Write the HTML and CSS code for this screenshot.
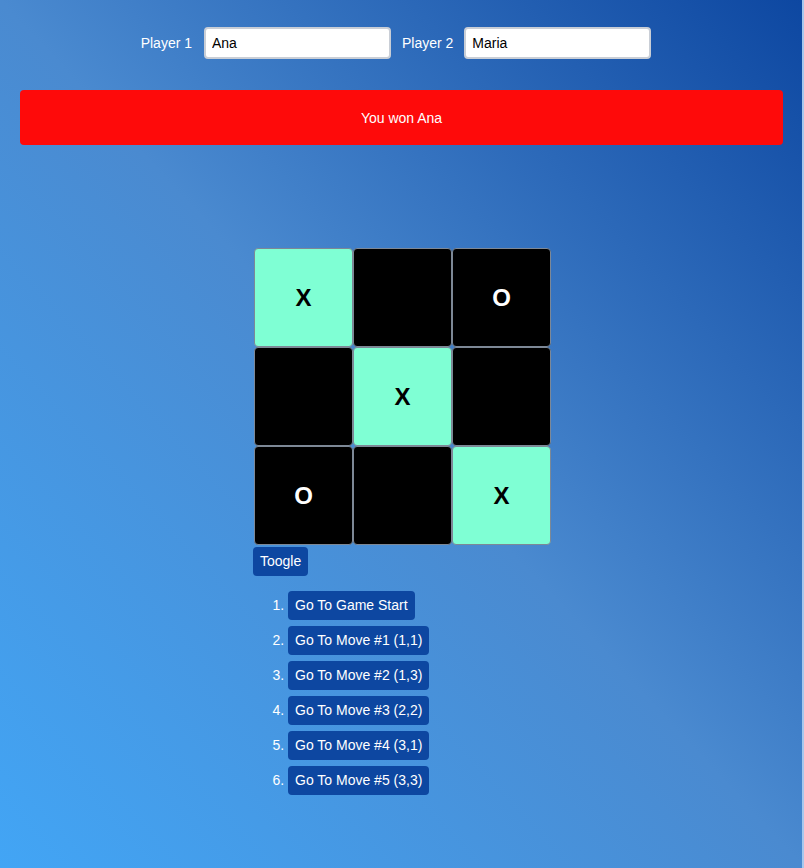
FILE: index.html
```html
<!DOCTYPE html>
<html lang="en">
<head>
<meta charset="utf-8">
<title>Tic Tac Toe</title>
<link rel="stylesheet" href="styles.css">
</head>
<body>
<div class="app">
  <div class="players">
    <label class="player-label">Player 1</label>
    <input class="player-input" type="text" value="Ana">
    <label class="player-label second">Player 2</label>
    <input class="player-input" type="text" value="Maria">
  </div>
  <div class="banner">You won Ana</div>
  <div class="game">
    <div class="board">
      <div class="cell win">X</div>
      <div class="cell"></div>
      <div class="cell">O</div>
      <div class="cell"></div>
      <div class="cell win">X</div>
      <div class="cell"></div>
      <div class="cell">O</div>
      <div class="cell"></div>
      <div class="cell win">X</div>
    </div>
    <button class="btn toggle">Toogle</button>
    <ol class="moves">
      <li><button class="btn">Go To Game Start</button></li>
      <li><button class="btn">Go To Move #1 (1,1)</button></li>
      <li><button class="btn">Go To Move #2 (1,3)</button></li>
      <li><button class="btn">Go To Move #3 (2,2)</button></li>
      <li><button class="btn">Go To Move #4 (3,1)</button></li>
      <li><button class="btn">Go To Move #5 (3,3)</button></li>
    </ol>
  </div>
</div>
</body>
</html>
```
FILE: styles.css
```css
html, body {
  margin: 0;
  padding: 0;
  min-height: 100%;
}
body {
  min-height: 868px;
  font-family: "Liberation Sans", Arial, sans-serif;
  font-size: 14px;
  color: #fff;
  background: linear-gradient(to top right, #42a5f5 0%, #4a8ad0 50%, #0d47a1 100%);
  box-shadow: inset -2px 0 0 #a6c8ee;
}
.app {
  display: flex;
  flex-direction: column;
}
.players {
  display: flex;
  justify-content: center;
  align-items: center;
  padding: 27px 12px 0 0;
}
.player-label {
  color: #fff;
  font-size: 14px;
  margin-right: 12px;
}
.player-label.second {
  margin-left: 11px;
  margin-right: 11px;
}
.player-input {
  box-sizing: border-box;
  width: 187px;
  height: 32px;
  margin: 0;
  padding: 0 6px;
  border: 2px solid #c9ced6;
  border-radius: 4px;
  background: #fff;
  font-family: "Liberation Sans", Arial, sans-serif;
  font-size: 14px;
  color: #000;
  outline: none;
}
.banner {
  margin: 31px 21px 0 20px;
  height: 55px;
  background: #fe0a0a;
  border-radius: 4px;
  display: flex;
  align-items: center;
  justify-content: center;
  font-size: 14px;
  color: #fff;
}
.game {
  width: 298px;
  margin: 103px auto 0;
  display: flex;
  flex-direction: column;
  align-items: flex-start;
}
.board {
  display: grid;
  grid-template-columns: repeat(3, 99px);
  grid-template-rows: repeat(3, 99px);
  margin-left: 1px;
}
.cell {
  box-sizing: border-box;
  border: 1px solid #7d8896;
  border-radius: 4px;
  background: #000;
  color: #fff;
  display: flex;
  align-items: center;
  justify-content: center;
  font-weight: bold;
  font-size: 24px;
}
.cell.win {
  background: #7fffd4;
  color: #000;
}
.btn {
  height: 29px;
  padding: 0 7px;
  border: none;
  border-radius: 4px;
  background: #0d47a1;
  color: #fff;
  font-family: "Liberation Sans", Arial, sans-serif;
  font-size: 14px;
  line-height: 29px;
  cursor: pointer;
  vertical-align: top;
}
.toggle {
  margin-top: 2px;
  padding: 0 7px;
}
.moves {
  margin: 15px 0 0;
  padding-left: 35px;
}
.moves li {
  height: 29px;
  line-height: 29px;
  margin-bottom: 6px;
  font-size: 14px;
  color: #fff;
}
```
